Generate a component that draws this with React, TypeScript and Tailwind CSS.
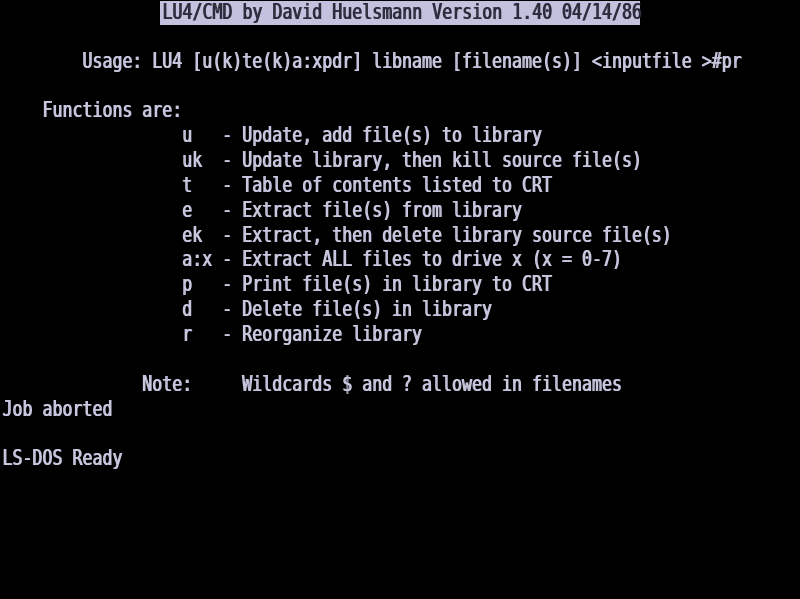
import React from "react";

const lines: string[] = [
  "",
  "",
  "        Usage: LU4 [u(k)te(k)a:xpdr] libname [filename(s)] <inputfile >#pr",
  "",
  "    Functions are:",
  "                  u   - Update, add file(s) to library",
  "                  uk  - Update library, then kill source file(s)",
  "                  t   - Table of contents listed to CRT",
  "                  e   - Extract file(s) from library",
  "                  ek  - Extract, then delete library source file(s)",
  "                  a:x - Extract ALL files to drive x (x = 0-7)",
  "                  p   - Print file(s) in library to CRT",
  "                  d   - Delete file(s) in library",
  "                  r   - Reorganize library",
  "",
  "              Note:     Wildcards $ and ? allowed in filenames",
  "Job aborted",
  "",
  "LS-DOS Ready",
];

export default function App() {
  return (
    <div
      className="w-[800px] h-[599px] bg-black overflow-hidden text-[#c6c6de] text-[16.6px]"
      style={{ fontFamily: '"DejaVu Sans Mono", "Liberation Mono", monospace' }}
    >
      <div className="blur-[0.4px] pl-[2px]">
        {lines.map((l, i) =>
          i === 0 ? (
            <div key={i} className="h-[24.85px] flex whitespace-pre">
              <span className="w-[158px]" />
              <span className="w-[480px] h-[24px] mt-[1px] bg-[#c2c2de] text-[#2c2c3c] leading-[24px] pl-[2px] [text-shadow:1px_0_0_#2c2c3c]">
                <span className="inline-block scale-y-[1.25] origin-center">
                  LU4/CMD by David Huelsmann Version 1.40 04/14/86
                </span>
              </span>
            </div>
          ) : (
            <div key={i} className="h-[24.85px] leading-[24.85px] whitespace-pre [text-shadow:1px_0_0_#c6c6de]">
              <span className="inline-block scale-y-[1.25] origin-center">{l || " "}</span>
            </div>
          )
        )}
      </div>
    </div>
  );
}
